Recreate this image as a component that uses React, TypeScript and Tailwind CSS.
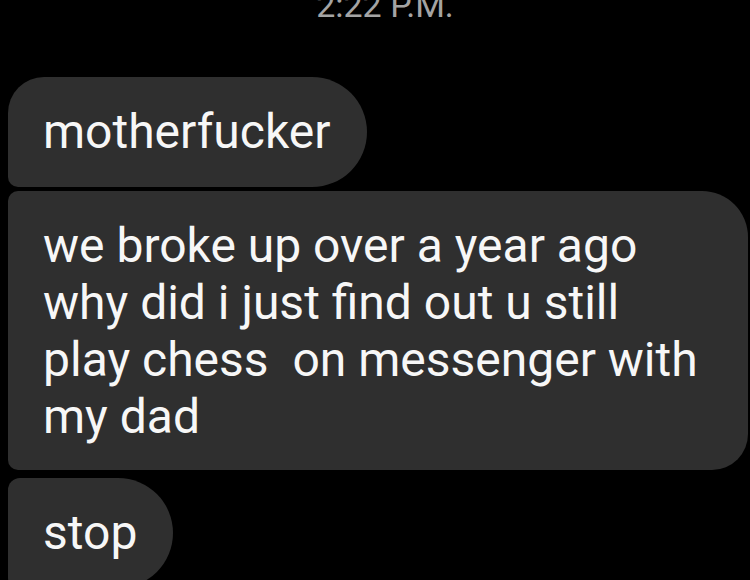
import React from 'react';

const messages = [
  { id: 'm1', text: ['motherfucker'], shape: 'rounded-tl-[36px] rounded-tr-[55px] rounded-br-[55px] rounded-bl-[10px] pb-[27px]', gap: 'mt-0' },
  {
    id: 'm2',
    text: ['we broke up over a year ago', 'why did i just find out u still', 'play chess\u00a0 on messenger with', 'my dad'],
    shape: 'w-[740px] rounded-tl-[10px] rounded-tr-[46px] rounded-br-[36px] rounded-bl-[10px] pb-[25px]',
    gap: 'mt-[4px]',
  },
  { id: 'm3', text: ['stop'], shape: 'rounded-tl-[12px] rounded-tr-[55px] rounded-br-[55px] rounded-bl-[10px] pb-[27px]', gap: 'mt-[8px]' },
];

export default function App() {
  return (
    <div className="w-[750px] h-[580px] bg-black overflow-hidden font-['Roboto',sans-serif]">
      {/* Timestamp, cut off at the top */}
      <div className="h-[77px] flex justify-center">
        <span className="-mt-[15px] ml-[20px] text-[34px] leading-[40px] text-[#a4a4a4]">2:22 P.M.</span>
      </div>

      {/* Bubbles */}
      <div className="flex flex-col items-start pl-[8px]">
        {messages.map((m) => (
          <div
            key={m.id}
            className={`${m.gap} ${m.shape} bg-[#2f2f2f] pl-[35px] pr-[36px] pt-[26px] text-[#f7f7f7] text-[48px] leading-[57px]`}
          >
            {m.text.map((line, i) => (
              <div key={i} className="whitespace-pre">{line}</div>
            ))}
          </div>
        ))}
      </div>
    </div>
  );
}
